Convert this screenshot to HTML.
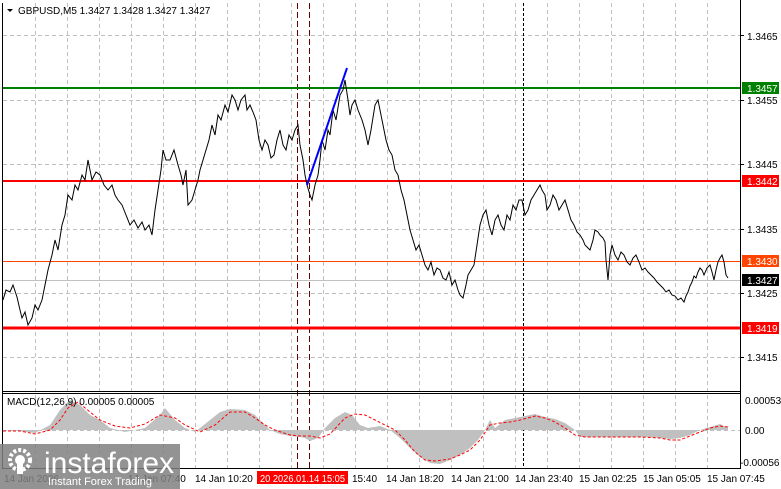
<!DOCTYPE html>
<html><head><meta charset="utf-8"><style>
html,body{margin:0;padding:0;background:#fff;width:781px;height:489px;overflow:hidden}
svg{display:block;font-family:"Liberation Sans",sans-serif}
</style></head><body>
<svg width="781" height="489" viewBox="0 0 781 489" xmlns="http://www.w3.org/2000/svg">
<rect width="781" height="489" fill="#fff"/>
<g stroke="#c0c0c0" stroke-dasharray="4,3" stroke-width="1">
<line x1="35.5" y1="3" x2="35.5" y2="468"/><line x1="67.5" y1="3" x2="67.5" y2="468"/>
<line x1="99.5" y1="3" x2="99.5" y2="468"/><line x1="131.5" y1="3" x2="131.5" y2="468"/>
<line x1="163.5" y1="3" x2="163.5" y2="468"/><line x1="195.5" y1="3" x2="195.5" y2="468"/>
<line x1="227.5" y1="3" x2="227.5" y2="468"/><line x1="259.5" y1="3" x2="259.5" y2="468"/>
<line x1="291.5" y1="3" x2="291.5" y2="468"/><line x1="323.5" y1="3" x2="323.5" y2="468"/>
<line x1="355.5" y1="3" x2="355.5" y2="468"/><line x1="387.5" y1="3" x2="387.5" y2="468"/>
<line x1="419.5" y1="3" x2="419.5" y2="468"/><line x1="451.5" y1="3" x2="451.5" y2="468"/>
<line x1="483.5" y1="3" x2="483.5" y2="468"/><line x1="515.5" y1="3" x2="515.5" y2="468"/>
<line x1="547.5" y1="3" x2="547.5" y2="468"/><line x1="579.5" y1="3" x2="579.5" y2="468"/>
<line x1="611.5" y1="3" x2="611.5" y2="468"/><line x1="643.5" y1="3" x2="643.5" y2="468"/>
<line x1="675.5" y1="3" x2="675.5" y2="468"/><line x1="707.5" y1="3" x2="707.5" y2="468"/>
<line x1="3" y1="35.5" x2="740" y2="35.5"/><line x1="3" y1="100.5" x2="740" y2="100.5"/>
<line x1="3" y1="164.5" x2="740" y2="164.5"/><line x1="3" y1="229.5" x2="740" y2="229.5"/>
<line x1="3" y1="293.5" x2="740" y2="293.5"/><line x1="3" y1="357.5" x2="740" y2="357.5"/>
<line x1="3" y1="430.5" x2="740" y2="430.5"/>
</g>
<line x1="523.5" y1="3" x2="523.5" y2="468" stroke="#000" stroke-dasharray="3,2"/>
<line x1="297.5" y1="3" x2="297.5" y2="468" stroke="#600" stroke-dasharray="6,3"/>
<line x1="309.5" y1="3" x2="309.5" y2="468" stroke="#600" stroke-dasharray="6,3"/>
<line x1="3" y1="88" x2="740" y2="88" stroke="#008000" stroke-width="2"/>
<line x1="3" y1="181" x2="740" y2="181" stroke="#f00" stroke-width="2"/>
<line x1="3" y1="261.5" x2="740" y2="261.5" stroke="#ff4500" stroke-width="1"/>
<line x1="3" y1="280.5" x2="740" y2="280.5" stroke="#c0c0c0" stroke-width="1"/>
<line x1="3" y1="328" x2="740" y2="328" stroke="#f00" stroke-width="3"/>
<polyline fill="none" stroke="#000" stroke-width="1" points="3,300 6,290 10,292 13,285 17,297 20,310 22,318 25,312 28,325 32,318 35,305 38,310 42,300 45,285 48,270 52,255 55,240 58,250 62,225 65,215 68,195 72,200 75,185 78,190 82,175 85,180 88,160 90,170 92,180 96,172 100,175 104,185 108,190 112,185 115,195 118,200 122,205 126,215 130,225 134,220 138,228 142,222 145,230 149,225 152,235 155,210 158,190 161,170 163,150 166,160 170,160 174,150 178,165 181,175 183,185 186,170 188,205 192,200 195,190 198,180 200,170 203,160 206,150 209,140 212,125 215,135 218,115 221,120 225,105 228,112 232,95 235,100 238,110 241,100 245,95 247,110 250,105 253,112 256,120 259,140 262,150 265,140 268,145 271,158 274,155 277,140 280,130 283,145 286,150 289,135 292,140 295,130 298,125 300,145 303,160 305,175 307,185 310,195 312,200 315,185 318,175 320,160 322,140 325,150 328,130 330,135 333,110 336,120 340,95 343,90 345,80 348,100 350,115 352,105 355,100 358,110 362,120 365,130 368,145 371,130 375,105 378,100 380,110 383,125 386,140 389,150 392,155 395,170 398,175 401,190 404,200 407,215 410,230 413,240 416,250 419,245 422,255 425,265 428,270 431,262 434,275 437,268 440,270 443,278 446,280 449,272 452,285 455,280 458,290 460,295 463,298 466,285 468,275 471,270 474,265 477,245 480,225 483,215 486,210 489,225 492,235 495,220 498,215 501,225 504,230 507,215 510,220 513,205 516,210 519,200 522,200 525,215 528,210 531,200 534,195 537,190 540,185 542,190 545,195 547,210 550,205 553,195 556,200 559,210 562,205 565,200 568,210 571,220 574,225 577,232 580,235 583,240 585,245 588,248 590,250 593,240 595,230 598,232 600,235 603,238 605,242 606,260 608,280 610,255 612,245 615,255 618,260 621,252 624,255 627,262 630,265 633,258 636,255 639,262 642,270 645,268 648,272 651,275 654,278 657,282 660,285 663,288 666,292 669,290 672,295 675,296 678,300 681,298 684,302 686,296 688,292 690,286 692,282 694,276 696,278 698,272 700,268 702,270 704,275 707,268 710,265 712,272 714,280 716,270 718,262 720,258 722,255 724,262 726,275 728,278"/>
<line x1="307" y1="185" x2="347" y2="68" stroke="#00f" stroke-width="2"/>
<!-- MACD -->
<polygon fill="#c0c0c0" points="3,430 20,431 35,433 50,425 60,410 70,400 80,405 90,415 100,420 110,428 125,432 145,428 160,415 165,408 175,420 185,428 195,432 210,420 220,412 230,409 245,410 255,415 262,422 270,430 280,434 290,436 300,437 305,438 310,441 318,438 325,428 335,418 345,412 352,415 360,425 368,428 380,426 390,430 400,438 410,448 420,457 430,463 440,464 450,460 460,455 470,448 478,440 485,430 490,420 495,428 505,420 515,418 525,416 535,414 545,417 555,419 565,423 575,430 580,437 590,437 610,437 630,437 650,437 660,438 670,439 680,438 690,435 700,430 710,427 720,424 728,428 728,430 3,430"/>
<polyline fill="none" stroke="#f00" stroke-width="1" stroke-dasharray="3,2" points="3,431 20,431 35,434 50,430 60,420 68,408 78,402 90,412 100,420 115,426 130,428 145,424 160,415 175,418 185,425 200,432 215,425 230,412 245,412 255,418 265,425 275,430 290,435 300,436 310,436 320,438 330,434 345,418 355,414 365,415 375,420 385,425 395,430 405,440 415,452 425,460 435,461 450,459 460,455 470,450 480,440 490,425 500,423 510,422 520,420 535,416 545,418 555,422 565,428 575,435 585,437 610,437 640,437 660,438 670,440 680,440 690,436 700,432 710,428 720,426 728,427"/>
<!-- frames -->
<line x1="740.5" y1="0" x2="740.5" y2="468" stroke="#000"/>
<line x1="2.5" y1="3" x2="2.5" y2="468" stroke="#000"/>
<line x1="2" y1="391.5" x2="741" y2="391.5" stroke="#000"/>
<line x1="2" y1="393.5" x2="741" y2="393.5" stroke="#000"/>
<line x1="2" y1="468.5" x2="741" y2="468.5" stroke="#000"/>
<g stroke="#000"><line x1="740" y1="35.5" x2="744" y2="35.5"/><line x1="740" y1="100.5" x2="744" y2="100.5"/><line x1="740" y1="164.5" x2="744" y2="164.5"/><line x1="740" y1="229.5" x2="744" y2="229.5"/><line x1="740" y1="293.5" x2="744" y2="293.5"/><line x1="740" y1="357.5" x2="744" y2="357.5"/></g>
<g font-size="10" fill="#000">
<polygon points="7,9 13,9 10,12" fill="#000"/>
<text x="18" y="14">GBPUSD,M5  1.3427 1.3428 1.3427 1.3427</text>
<text x="747" y="40">1.3465</text>
<text x="747" y="104">1.3455</text>
<text x="747" y="168">1.3445</text>
<text x="747" y="233">1.3435</text>
<text x="747" y="297">1.3425</text>
<text x="747" y="361">1.3415</text>
<rect x="742" y="82" width="37" height="12" fill="#008000"/><text x="747" y="92" fill="#fff">1.3457</text>
<rect x="742" y="175" width="37" height="12" fill="#f00"/><text x="747" y="185" fill="#fff">1.3442</text>
<rect x="742" y="255" width="37" height="12" fill="#ff4500"/><text x="747" y="265" fill="#fff">1.3430</text>
<rect x="742" y="274" width="37" height="12" fill="#000"/><text x="747" y="284" fill="#fff">1.3427</text>
<rect x="742" y="322" width="37" height="12" fill="#f00"/><text x="747" y="332" fill="#fff">1.3419</text>
<text x="7" y="405">MACD(12,26,9) 0.00005 0.00005</text>
<text x="745" y="404">0.00053</text>
<text x="745" y="434">0.00</text>
<text x="740" y="466">-0.00056</text>
<text x="4" y="482">14 Jan 2026</text>
<text x="128" y="482">14 Jan 07:40</text>
<text x="195" y="482">14 Jan 10:20</text>
<rect x="257" y="471" width="91" height="13" fill="#f00"/>
<text x="260" y="482" fill="#fff" textLength="85" lengthAdjust="spacingAndGlyphs">20 2026.01.14 15:05</text>
<text x="352" y="482">15:40</text>
<text x="386" y="482">14 Jan 18:20</text>
<text x="451" y="482">14 Jan 21:00</text>
<text x="515" y="482">14 Jan 23:40</text>
<text x="579" y="482">15 Jan 02:25</text>
<text x="643" y="482">15 Jan 05:05</text>
<text x="707" y="482">15 Jan 07:45</text>
</g>
<!-- logo -->
<rect x="0" y="444" width="180" height="45" fill="#808080" opacity="0.85"/>
<g fill="#fff">
<circle cx="20" cy="460" r="10" fill="none" stroke="#fff" stroke-width="4" stroke-dasharray="3,2"/>
<circle cx="20" cy="460" r="5"/>
<rect x="17" y="462" width="6" height="12"/>
</g>
<text x="44" y="473" font-size="30" fill="#fff">instaforex</text>
<text x="48" y="485" font-size="11" fill="#fff">Instant Forex Trading</text>
</svg>
</body></html>
